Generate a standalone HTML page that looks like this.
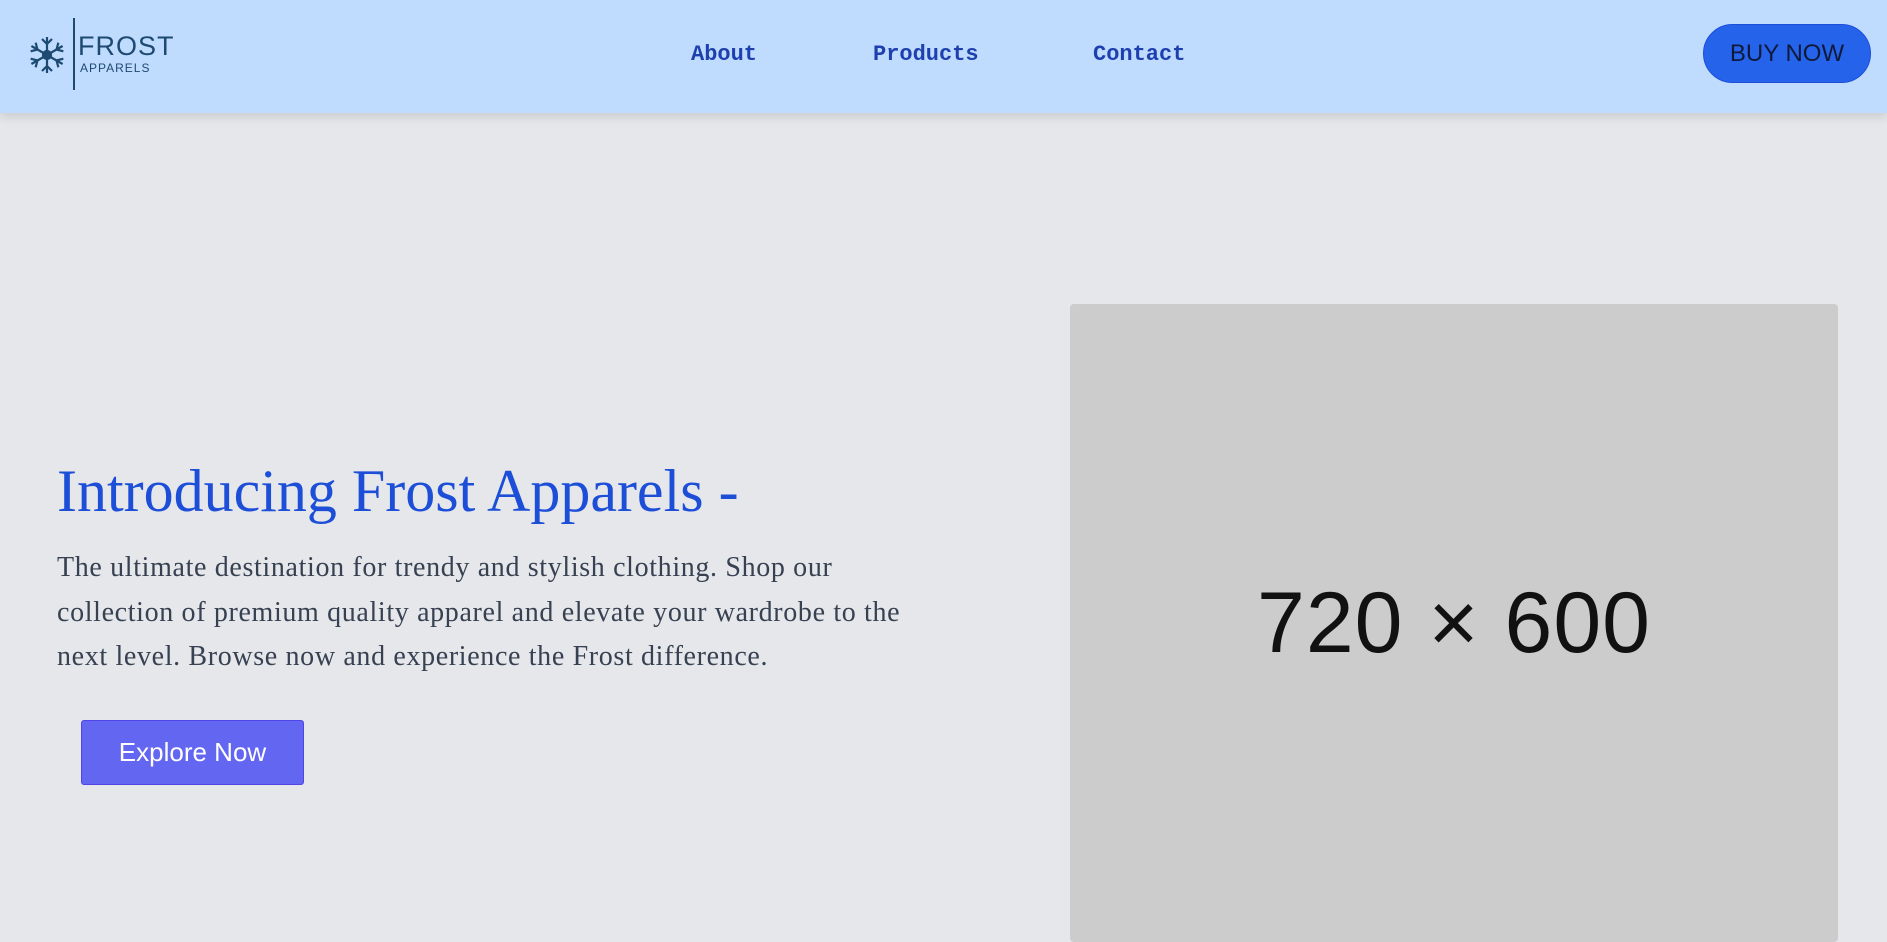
<!DOCTYPE html>
<html><head><meta charset="utf-8"><style>
*{margin:0;padding:0;box-sizing:border-box}
body{width:1887px;height:828px;overflow:hidden;background:#e5e7eb;font-family:"Liberation Sans",sans-serif;position:relative}
header{position:absolute;left:0;top:0;width:1887px;height:113px;background:#bfdbfe;box-shadow:0 4px 10px rgba(0,0,0,.12);z-index:2}
.line{position:absolute;left:73px;top:18px;width:2px;height:72px;background:#1e4a72}
.frost{position:absolute;left:78px;top:31px;font-size:27px;color:#1e4a72;letter-spacing:1px}
.app{position:absolute;left:80px;top:61px;font-size:12px;color:#1e4a72;letter-spacing:1px}
.nav{position:absolute;top:42px;font-family:"Liberation Mono",monospace;font-weight:bold;font-size:22px;color:#1e40af}
.buy{position:absolute;left:1703px;top:24px;width:168px;height:59px;border-radius:30px;background:#2563eb;border:1px solid #1d4ed8;color:#0f1a3a;font-size:24px;display:flex;align-items:center;justify-content:center}
h1{position:absolute;left:57px;top:457px;font-family:"Liberation Serif",serif;font-weight:normal;font-size:60px;color:#1d4ed8;white-space:nowrap}
p{position:absolute;left:57px;top:546px;white-space:nowrap;font-family:"Liberation Serif",serif;font-size:28px;letter-spacing:0.65px;line-height:44.5px;color:#374151}
.btn{position:absolute;left:81px;top:720px;width:223px;height:65px;background:#6366f1;border:1px solid #4f46e5;border-radius:3px;color:#fff;font-size:26px;display:flex;align-items:center;justify-content:center}
.img{position:absolute;left:1070px;top:304px;width:768px;height:638px;background:#cccccc;border-radius:4px;display:flex;align-items:center;justify-content:center}
.img span{font-size:86px;color:#111;letter-spacing:1px}
</style></head><body>
<header>
<svg style="position:absolute;left:27px;top:35px" width="40" height="40" viewBox="-20 -20 40 40" stroke="#1e4a72" stroke-width="2.2" fill="none">
<g id="a"><line x1="0" y1="0" x2="0" y2="-18"/><line x1="0" y1="-11" x2="-5" y2="-16"/><line x1="0" y1="-11" x2="5" y2="-16"/></g>
<use href="#a" transform="rotate(60)"/><use href="#a" transform="rotate(120)"/><use href="#a" transform="rotate(180)"/><use href="#a" transform="rotate(240)"/><use href="#a" transform="rotate(300)"/>
<circle r="4" fill="#1e4a72"/></svg>
<div class="line"></div>
<div class="frost">FROST</div>
<div class="app">APPARELS</div>
<div class="nav" style="left:691px">About</div>
<div class="nav" style="left:873px">Products</div>
<div class="nav" style="left:1093px">Contact</div>
<div class="buy">BUY NOW</div>
</header>
<h1>Introducing Frost Apparels -</h1>
<p>The ultimate destination for trendy and stylish clothing. Shop our<br>collection of premium quality apparel and elevate your wardrobe to the<br>next level. Browse now and experience the Frost difference.</p>
<div class="btn">Explore Now</div>
<div class="img"><span>720 × 600</span></div>
</body></html>
